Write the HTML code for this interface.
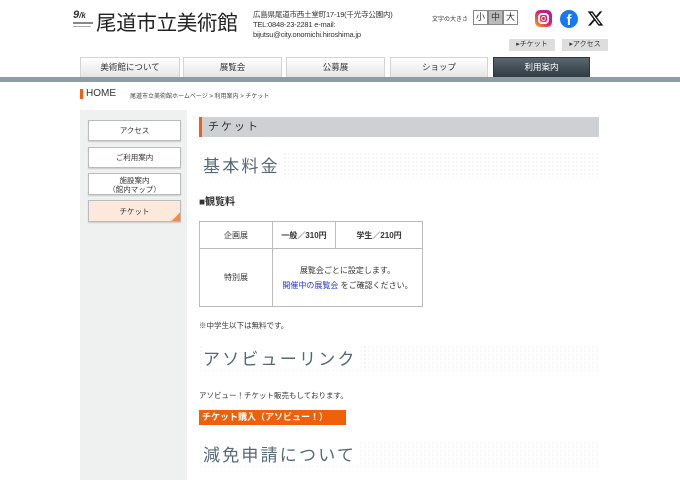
<!DOCTYPE html><html><head><meta charset="utf-8"><style>
*{margin:0;padding:0;box-sizing:border-box}
body{width:680px;height:480px;overflow:hidden;background:#fff;font-family:"Liberation Sans","Noto Sans CJK JP",sans-serif;color:#333;position:relative}
.a{position:absolute}
.tab{position:absolute;top:57px;height:20px;background:linear-gradient(#fff,#e6e6e6);border:1px solid #d4d4d4;border-bottom:none;font-size:8.5px;text-align:center;line-height:19px;color:#333}
.side{position:absolute;left:88px;width:93px;background:#fff;border:1px solid #bbb;box-shadow:0 1px 1px #ccc;font-size:7.5px;text-align:center;color:#333}
.dot{position:absolute;left:199px;width:400px;height:26px;background-image:radial-gradient(#ddd 0.6px,transparent 0.8px);background-size:4px 4px}
.h{position:absolute;left:203px;font-size:17px;letter-spacing:2.2px;color:#556877;background:#fff;padding-right:4px}
td{border:1px solid #bbb;font-size:8px;text-align:center}
</style></head><body>
<div class="a" style="left:73px;top:10px;font-size:11px;font-weight:bold;color:#333;line-height:11px;font-style:italic">9<span style="font-size:8px">/k</span></div>
<div class="a" style="left:73px;top:22px;width:20px;height:2px;background:#888"></div>
<div class="a" style="left:73px;top:26px;width:18px;height:1px;background:#aaa"></div>
<div class="a" style="left:96px;top:6px;font-size:20.5px;color:#222;letter-spacing:-0.3px">尾道市立美術館</div>
<div class="a" style="left:253px;top:10px;font-size:7.5px;line-height:10px;color:#333;letter-spacing:-0.2px">広島県尾道市西土堂町17-19(千光寺公園内)<br>TEL:0848-23-2281 e-mail:<br>bijutsu@city.onomichi.hiroshima.jp</div>
<div class="a" style="left:432px;top:14px;font-size:6px">文字の大きさ</div>
<div class="a" style="left:473px;top:10px;width:15px;height:15px;border:1px solid #888;font-size:9px;text-align:center;line-height:13px">小</div>
<div class="a" style="left:488px;top:10px;width:15px;height:15px;border:1px solid #888;background:#bbb;font-size:9px;text-align:center;line-height:13px">中</div>
<div class="a" style="left:503px;top:10px;width:15px;height:15px;border:1px solid #888;font-size:9px;text-align:center;line-height:13px">大</div>
<div class="a" style="left:535px;top:10px;width:17px;height:17px;border-radius:5px;background:linear-gradient(45deg,#f9a825,#e91e63,#8e24aa)"><div class="a" style="left:3px;top:3px;width:11px;height:11px;border:2px solid #fff;border-radius:4px"></div><div class="a" style="left:6px;top:6px;width:5px;height:5px;border:1.5px solid #fff;border-radius:50%"></div></div>
<div class="a" style="left:560px;top:10px;width:18px;height:18px;border-radius:50%;background:#1877f2;color:#fff;font-weight:bold;font-size:15px;text-align:center;line-height:21px;overflow:hidden">f</div>
<svg class="a" style="left:587px;top:10px" width="17" height="17" viewBox="0 0 24 24"><path d="M18.2 2h3.4l-7.4 8.5L23 22h-6.8l-5.3-7-6.1 7H1.4l7.9-9L1 2h7l4.8 6.4zm-1.2 18h1.9L7.1 4H5.1z" fill="#111"/></svg>
<div class="a" style="left:509px;top:39px;width:46px;height:12px;background:#ddd;font-size:7px;line-height:12px;text-align:center">▸チケット</div>
<div class="a" style="left:562px;top:39px;width:46px;height:12px;background:#ddd;font-size:7px;line-height:12px;text-align:center">▸アクセス</div>
<div class="tab" style="left:80px;width:100px">美術館について</div>
<div class="tab" style="left:183px;width:99px">展覧会</div>
<div class="tab" style="left:286px;width:99px">公募展</div>
<div class="tab" style="left:390px;width:98px">ショップ</div>
<div class="tab" style="left:493px;width:97px;background:linear-gradient(#5a6670,#2f3a42);color:#fff;border-color:#333">利用案内</div>
<div class="a" style="left:0;top:77px;width:680px;height:5px;background:#8e9ca3"></div>
<div class="a" style="left:80px;top:89px;width:3px;height:10px;background:#f06010"></div>
<div class="a" style="left:86px;top:88px;font-size:10px;color:#333">HOME</div>
<div class="a" style="left:130px;top:91px;font-size:6px;color:#444">尾道市立美術館ホームページ &gt; 利用案内 &gt; チケット</div>
<div class="a" style="left:80px;top:110px;width:107px;height:370px;background:#eff0f0"></div>
<div class="side" style="top:120px;height:21px;line-height:20px">アクセス</div>
<div class="side" style="top:147px;height:21px;line-height:20px">ご利用案内</div>
<div class="side" style="top:173px;height:22px;line-height:9px;padding-top:2px">施設案内<br>（館内マップ）</div>
<div class="side" style="top:200px;height:22px;line-height:21px;background:#fde8dc;overflow:hidden">チケット<div class="a" style="right:-6px;bottom:-6px;width:12px;height:12px;background:#f08a50;transform:rotate(45deg)"></div></div>
<div class="a" style="left:199px;top:117px;width:400px;height:20px;background:#cdd1d4;border-left:3px solid #f06010;font-size:11px;line-height:20px;padding-left:6px;letter-spacing:2px;color:#333">チケット</div>
<div class="dot" style="top:152px"></div><div class="h" style="top:152px">基本料金</div>
<div class="a" style="left:199px;top:193px;font-size:10px;font-weight:bold;color:#333">■観覧料</div>
<table class="a" style="left:199px;top:221px;width:224px;height:86px;border-collapse:collapse">
<tr style="height:27px"><td style="width:73px">企画展</td><td style="width:63px;font-weight:bold">一般／310円</td><td style="font-weight:bold">学生／210円</td></tr>
<tr><td>特別展</td><td colspan="2" style="line-height:15px">展覧会ごとに設定します。<br><span style="color:#2233dd">開催中の展覧会</span> をご確認ください。</td></tr></table>
<div class="a" style="left:199px;top:320px;font-size:7.5px">※中学生以下は無料です。</div>
<div class="dot" style="top:345px"></div><div class="h" style="top:345px">アソビューリンク</div>
<div class="a" style="left:199px;top:390px;font-size:7.5px">アソビュー！チケット販売もしております。</div>
<div class="a" style="left:199px;top:410px;width:147px;height:15px;background:#f0600a;color:#fff;font-size:9px;font-weight:bold;line-height:15px;padding-left:3px">チケット購入（アソビュー！）</div>
<div class="dot" style="top:441px"></div><div class="h" style="top:441px">減免申請について</div>
</body></html>
